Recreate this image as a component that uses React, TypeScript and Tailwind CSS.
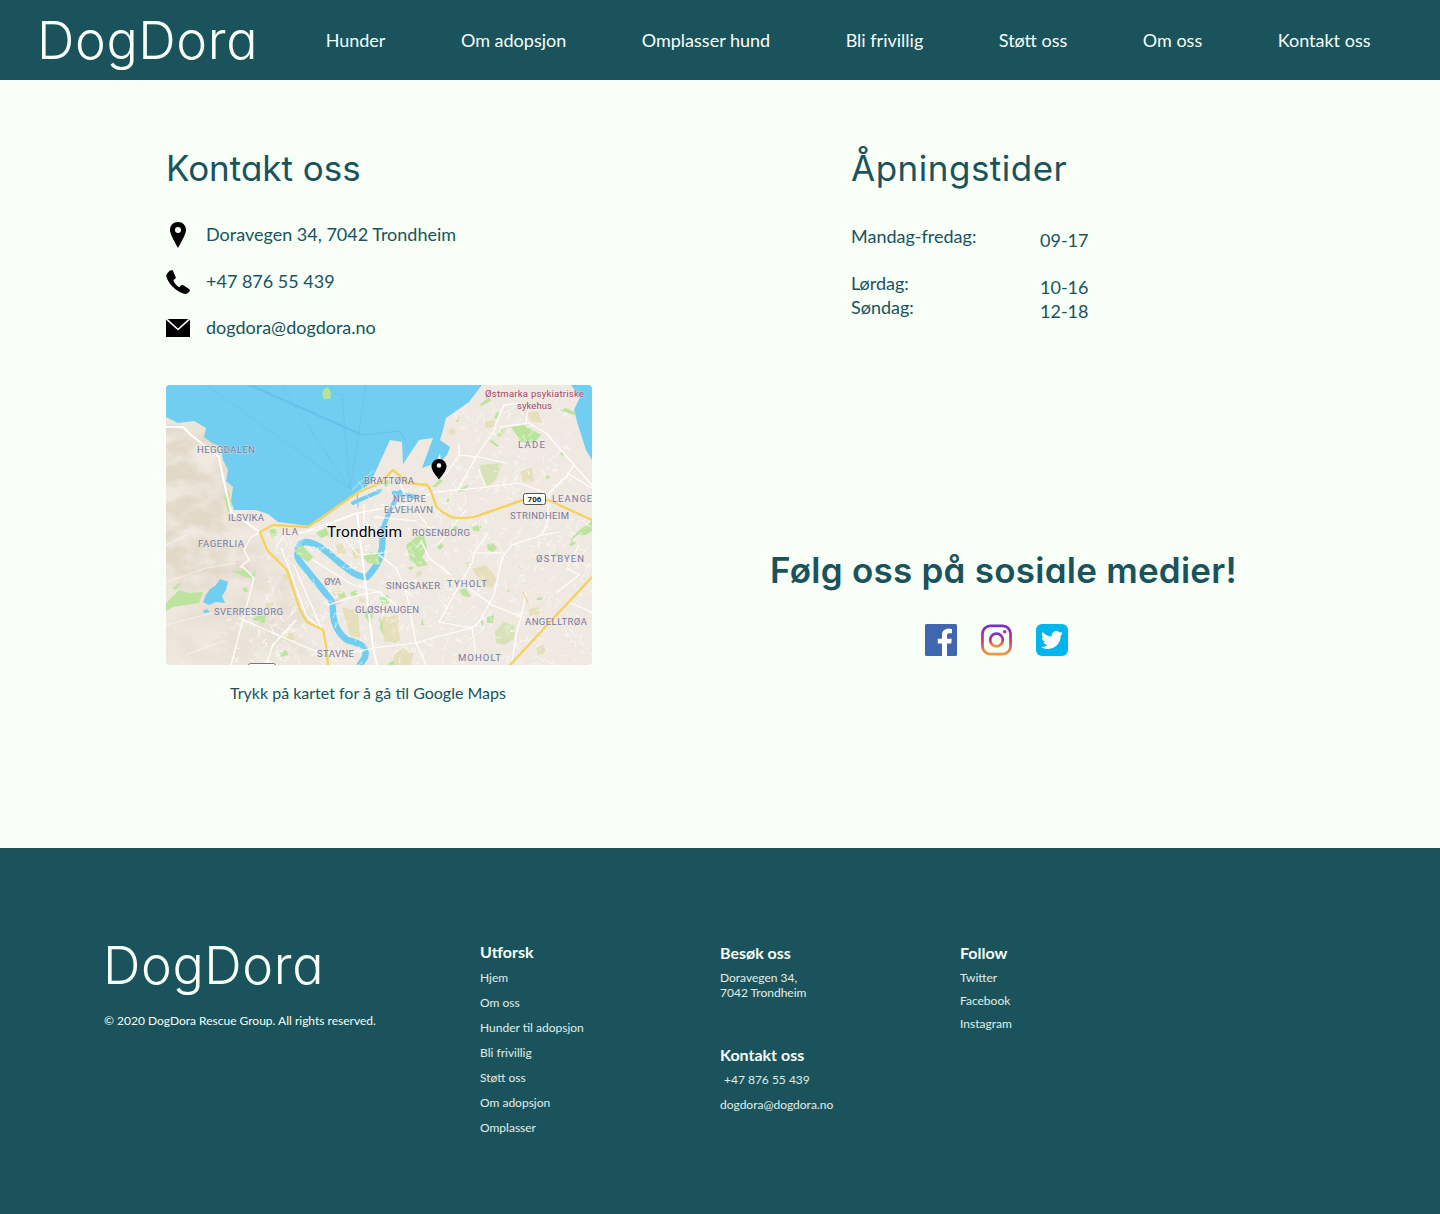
import React from 'react';
import { FaTwitter } from 'react-icons/fa';

const navLinks = ['Hunder', 'Om adopsjon', 'Omplasser hund', 'Bli frivillig', 'Støtt oss', 'Om oss', 'Kontakt oss'];
const exploreLinks = ['Hjem', 'Om oss', 'Hunder til adopsjon', 'Bli frivillig', 'Støtt oss', 'Om adopsjon', 'Omplasser'];
const followLinks = ['Twitter', 'Facebook', 'Instagram'];

const heading = "font-['Inter',sans-serif] [font-feature-settings:'cv11']";

// x, baseline, width, text
const mapLabels: [number, number, number, string][] = [
  [31, 68, 58, 'HEGGDALEN'],
  [198, 99, 50, 'BRATTØRA'],
  [227, 117, 33, 'NEDRE'],
  [218, 128, 49, 'ELVEHAVN'],
  [352, 63, 27, 'LADE'],
  [386, 117, 48, 'LEANGEN'],
  [344, 134, 59, 'STRINDHEIM'],
  [62, 136, 36, 'ILSVIKA'],
  [116, 150, 16, 'ILA'],
  [246, 151, 58, 'ROSENBORG'],
  [32, 162, 46, 'FAGERLIA'],
  [370, 177, 48, 'ØSTBYEN'],
  [158, 200, 17, 'ØYA'],
  [220, 204, 54, 'SINGSAKER'],
  [281, 202, 40, 'TYHOLT'],
  [48, 230, 69, 'SVERRESBORG'],
  [189, 228, 64, 'GLØSHAUGEN'],
  [359, 240, 62, 'ANGELLTRØA'],
  [151, 272, 37, 'STAVNE'],
  [292, 276, 43, 'MOHOLT'],
];

const greens = [
  'M345 42L358 40 375 50 368 58 355 57Z', 'M313 20L322 13 326 15 316 21Z', 'M328 33L331 27 333 28 331 34Z', 'M330 50L338 43 341 45 334 52Z',
  'M323 56L326 55 333 61 331 62Z', 'M290 36L292 32 294 33 292 37Z', 'M266 102L274 94 277 96 270 102Z', 'M291 107L300 100 303 101 295 107Z',
  'M278 117L282 113 284 116Z', 'M379 93L381 90 384 92 382 94Z', 'M394 68L397 66 399 69 396 71Z', 'M393 25L400 23 410 28 408 30Z',
  'M240 160L250 152 258 150 261 162 256 172 262 180 252 182 244 175Z', 'M270 162L275 158 278 161 274 165Z', 'M283 143L290 140 292 144 285 146Z', 'M305 142L316 140 313 146 308 146Z',
  'M321 160L326 157 331 163 327 167 322 165Z', 'M293 205L300 203 305 212 297 211Z', 'M321 232L328 230 327 238 321 238Z', 'M313 240L316 234 318 237 316 241Z',
  'M255 240L256 233 258 240Z', 'M213 212L222 210 224 218 216 220Z', 'M213 232L222 240 232 250 230 258 220 254 214 244Z', 'M403 160L406 156 410 158 406 161Z',
  'M371 213L376 212 376 215 371 215Z', 'M352 183L354 181 355 184Z', 'M341 206L342 204 344 207Z', 'M223 278L228 275 230 280 222 280Z', 'M242 183L245 181 248 183 244 185Z',
  'M0 218L13 205 23 208 37 207 33 218 20 220 7 222 0 226Z', 'M7 203L13 198 15 199 9 205Z', 'M65 186L78 185 85 190 90 184 88 193 80 192Z', 'M77 203L81 202 82 207 78 207Z',
  'M86 232L100 230 99 238 88 236Z', 'M113 268L121 265 122 270 115 272Z', 'M103 145L110 143 112 150 106 153Z', 'M128 165L136 160 147 172 142 177 134 172Z',
  'M197 172L205 167 213 170 213 180 202 178Z', 'M184 208L190 205 192 210 186 212Z', 'M172 210L178 207 180 212 174 214Z', 'M200 225L207 230 205 240 199 232Z',
  'M58 112L62 104 66 122 62 128Z', 'M388 170L391 166 393 170 390 172Z', 'M424 138L426 133V146L420 150 414 150Z', 'M216 100L220 95 224 96 220 102Z', 'M150 148L160 143 163 150 155 153Z',
];

const yellows = [
  'M360 28L372 26 376 38 365 36Z', 'M354 86L366 83 368 96 358 98Z', 'M306 184L320 180 331 194 326 203 316 200 310 190Z',
  'M363 224L373 222 374 229 364 231Z', 'M100 218L108 217 106 224 99 223Z', 'M117 249L127 248 129 255 118 255Z',
  'M216 232L232 230 234 256 218 257Z', 'M170 160L177 158 180 168 172 170Z', 'M186 165L193 163 195 172 188 174Z', 'M165 205L172 203 176 208 168 212Z', 'M176 222L192 226 194 254 184 250Z',
  'M282 45L288 43 290 49 284 50Z', 'M318 37L328 35 330 42 320 43Z', 'M258 142L263 138 266 144 260 146Z', 'M250 188L255 185 256 190 251 192Z', 'M194 212L200 214 198 218 193 216Z',
  'M116 190L122 188 124 194 118 196Z', 'M228 270L238 262 248 268 244 280H228Z', 'M370 262L378 260 380 268 372 270Z', 'M300 178L306 176 306 182 301 182Z',
];

const majorRoads = [
  'M94 147L85 152 78 165 83 175 74 182 77 182 88 193 65 280',
  'M140 146L191 128 237 120 262 110 270 107 313 103 353 98 380 108',
  'M278 92L293 70 293 58M293 70L313 72 341 78',
  'M328 43L338 20 353 18 362 24 360 38',
  'M333 42L363 38 380 48 408 80 426 100',
  'M330 43L313 67 296 97 290 107',
  'M408 80L400 92 383 108 381 140 376 150',
  'M401 88L426 103',
  'M313 85L320 102',
  'M376 150L346 160 336 173 328 210 313 237 306 243',
  'M376 150L393 147',
  'M308 168L338 168',
  'M322 148L308 168 306 178 273 237',
  'M303 203L326 220 355 232',
  'M360 208L355 232 350 250 346 277',
  'M273 237L306 243 310 270',
  'M250 258L266 253 306 243',
  'M213 262L250 258 260 280',
  'M413 190L401 183 413 160',
  'M391 207L413 190M405 218L426 227',
  'M213 170L230 183 240 205 250 258',
  'M255 155L263 173 285 190',
  'M73 233L123 255 147 265 173 270 213 262',
  'M115 163L123 183 140 230 157 247 162 280',
  'M128 180L157 247',
  'M162 220L193 210 213 207',
  'M130 235L107 260 100 280',
  'M147 175L187 200 213 207 232 222',
  'M191 128L150 145 118 150 110 162',
  'M233 96L240 112 238 125',
  'M215 120L235 122M210 132L250 136M198 120L198 155',
  'M216 168L192 170 175 148',
  'M265 145L252 128M300 125L280 150 272 160',
];

const faintRoads = ['M0 197L40 183 70 178', 'M0 240L47 228', 'M0 160L20 150', 'M100 150L150 148', 'M60 255L20 270'];

// thin street mesh, fixed seed so that every render gives the same map
function streetMesh() {
  let seed = 17;
  const next = () => {
    seed = (seed * 16807) % 2147483647;
    return seed / 2147483647;
  };
  const segs: string[] = [];
  const add = (x: number, y: number, s: number) => {
    segs.push(`M${x.toFixed(0)} ${y.toFixed(0)}l${((next() - 0.5) * s).toFixed(0)} ${((next() - 0.5) * s).toFixed(0)}l${((next() - 0.5) * s).toFixed(0)} ${((next() - 0.5) * s).toFixed(0)}`);
  };
  for (let i = 0; i < 620; i++) {
    const x = 100 + next() * 326;
    const y = 100 + next() * 180;
    if (x < 190 && y < 150) continue;
    add(x, y, 12);
  }
  for (let i = 0; i < 110; i++) {
    const x = 285 + next() * 120;
    const y = 20 + next() * 85;
    add(x, y, 10);
  }
  for (let i = 0; i < 50; i++) {
    add(60 + next() * 60, 220 + next() * 60, 10);
  }
  return segs.join('');
}

function TrondheimMap() {
  return (
    <svg viewBox="0 0 426 280" className="block w-[426px] h-[280px] rounded-[4px]" role="img" aria-label="Kart over Trondheim">
      <defs>
        <filter id="soft" x="0" y="0" width="100%" height="100%"><feGaussianBlur stdDeviation="0.3" /></filter>
        <filter id="fade" x="-20%" y="-20%" width="140%" height="140%"><feGaussianBlur stdDeviation="9" /></filter>
        <filter id="hill" x="0" y="0" width="100%" height="100%">
          <feTurbulence type="fractalNoise" baseFrequency="0.035 0.05" numOctaves="4" seed="8" />
          <feColorMatrix values="0 0 0 0 0.76  0 0 0 0 0.69  0 0 0 0 0.58  3 0 0 0 -0.850" />
        </filter>
        <mask id="hillMask">
          <g filter="url(#fade)" fill="#ffffff">
            <path d="M-20 30L60 50 70 130 95 160 80 200 40 200 -20 190Z" />
            <path d="M0 190L120 180 150 280H0Z" opacity="0.45" />
            <path d="M110 170L150 220 120 270 100 220Z" opacity="0.45" />
          </g>
        </mask>
      </defs>
      <rect width="426" height="280" fill="#efe9e1" />
      <rect width="426" height="280" fill="#000000" filter="url(#hill)" mask="url(#hillMask)" />
      <g filter="url(#soft)">
        {/* fjord */}
        <path
          fill="#72cef1"
          d="M0 0V32L12 38 28 36 40 43 38 52 46 58 55 62 57 75 62 85 60 96 67 102 65 116 68 125 90 125 102 129 112 137 143 141 152 137 175 120 194 106 205 98 207 92 224 55 236 57 237 79 253 55 267 53 256 83 270 78 274 68 275 76 281 70 284 62 274 55 277 45 280 33 303 17 316 0Z"
        />
        <path fill="#72cef1" d="M405 0H426V75L420 65 412 40 408 25 414 12Z" />
        <path fill="#b8e29a" d="M158 4l4-2 3 6-1 6-6 0-2-5z" />
        <g fill="none" stroke="#5db6e4" strokeWidth="0.6">
          <path d="M40 0L186 105M115 0L184 104M200 0L184 105M168 9L176 9 184 105" opacity="0.7" />
          <path d="M85 0L198 50 233 46 240 56M82 0L195 50" />
        </g>
        <path d="M186 105L208 85" stroke="#ffffff" strokeWidth="0.7" opacity="0.7" />
        {/* river and canals */}
        <g fill="none" stroke="#72cef1" strokeLinecap="round" strokeLinejoin="round">
          <path strokeWidth="6.500" d="M216 145C218 165 215 178 201 192 188 192 180 182 174 178 162 168 153 158 140 157 131 157 130 170 133 175 140 185 158 205 167 218 166 232 168 245 181 255 194 258 202 262 199 272L194 280" />
          <path strokeWidth="4.500" d="M216 145L224 125 234 107" />
          <path strokeWidth="4" d="M187 118L214 106" />
          <path strokeWidth="4.500" d="M228 108L250 112" />
          <path strokeWidth="1.200" d="M191 105L192 122" />
        </g>
        {/* lake */}
        <path fill="#72cef1" d="M54 194L62 197 60 205 56 211 59 218 50 217 43 220 37 217 40 210 44 204 50 200Z" />
        <path fill="#72cef1" d="M37 226L41 224 44 227 38 228Z" />
        <path d="M405 155C410 148 420 144 426 141M408 152C412 147 420 141 426 138" fill="none" stroke="#b8e29a" strokeWidth="1.500" />
        <g fill="#bce49f">{greens.map((d) => <path key={d} d={d} />)}</g>
        <g fill="#e5dfbc">{yellows.map((d) => <path key={d} d={d} />)}</g>
        <path fill="#d7e2b8" d="M314 80L336 78 330 95 320 102 316 94ZM329 246L338 237 350 241 348 254 338 260 330 258Z" />
        <path fill="#eccfd2" d="M168 215l5-2 2 5-5 2z" />
        <path d={streetMesh()} fill="none" stroke="#ffffff" strokeWidth="0.6" opacity="0.85" strokeLinejoin="round" />
        <g fill="none" stroke="#ffffff" strokeWidth="0.700" opacity="0.7">
          {faintRoads.map((d) => <path key={d} d={d} />)}
        </g>
        <g fill="none" stroke="#ffffff" strokeWidth="1.200" strokeLinejoin="round" strokeLinecap="round">
          {majorRoads.map((d) => <path key={d} d={d} />)}
        </g>
        <path d="M0 42L17 42 25 50 53 72 58 97 65 127 94 147M191 128L207 262 211 280" fill="none" stroke="#ffffff" strokeWidth="2" strokeLinejoin="round" />
        <g fill="none" stroke="#f5d261" strokeWidth="2.400" strokeLinejoin="round" strokeLinecap="round">
          <path d="M94 147L107 140 142 142 191 108 214 98 227 85 242 98 261 100C266 104 268 118 271 122 278 130 288 134 294 133 305 133 310 132 314 130L357 115 382 115 426 135" />
          <path d="M94 147L101 165 121 185 134 225 141 237 157 245 160 260 162 280" />
          <path d="M426 192L344 280" />
          <path d="M357 207L362 218" strokeWidth="1" />
        </g>
      </g>
      <g fontFamily="Roboto, sans-serif" fontSize="9.500" fill="#777aa0" stroke="#efe9e1" strokeWidth="0.900" paintOrder="stroke" strokeOpacity="0.65">
        {mapLabels.map(([x, y, w, t]) => (
          <text key={t} x={x} y={y} textLength={w} lengthAdjust="spacing">{t}</text>
        ))}
      </g>
      <g fontFamily="Roboto, sans-serif" fontSize="9.500" fill="#a8456f" stroke="#efe9e1" strokeWidth="0.800" paintOrder="stroke" strokeOpacity="0.65">
        <text x="319" y="12" textLength="99" lengthAdjust="spacing">Østmarka psykiatriske</text>
        <text x="351" y="24" textLength="35" lengthAdjust="spacing">sykehus</text>
      </g>
      <text x="161" y="152" textLength="75" lengthAdjust="spacing" fontFamily="Roboto, sans-serif" fontSize="15.500" fill="#000000" stroke="#ffffff" strokeWidth="1.500" paintOrder="stroke" strokeOpacity="0.7">Trondheim</text>
      <rect x="357.500" y="108.500" width="22" height="11" rx="2" fill="#ffffff" stroke="#555555" strokeWidth="1" />
      <text x="368.500" y="116.600" textAnchor="middle" fontFamily="Roboto, sans-serif" fontSize="8" fontWeight="700" fill="#222222">706</text>
      <rect x="82.500" y="278.500" width="27" height="10" rx="2" fill="#ffffff" stroke="#777777" strokeWidth="1" />
      {/* marker */}
      <path d="M273 74C268.800 74 265.500 77.300 265.500 81.400 265.500 85.500 270.800 91.500 273 94.500 275.200 91.500 280.500 85.500 280.500 81.400 280.500 77.300 277.200 74 273 74Z" fill="#000000" />
      <circle cx="273" cy="80.500" r="2.300" fill="#ffffff" />
    </svg>
  );
}

function PinIcon() {
  return (
    <svg viewBox="0 0 24 26" className="w-6 h-[26px] shrink-0" aria-hidden="true">
      <path fillRule="evenodd" d="M12 0C7.400 0 4 3.500 4 7.900 4 12.500 9.700 21.400 12 26 14.300 21.400 20 12.500 20 7.900 20 3.500 16.600 0 12 0ZM12 5A3 3 0 1 1 12 11 3 3 0 1 1 12 5Z" fill="#000000" />
    </svg>
  );
}

function PhoneIcon() {
  return (
    <svg viewBox="0 0 24 24" className="w-6 h-6 shrink-0" aria-hidden="true">
      <path d="M3 1.500C4 .5 6 0 6.800 .6L9.800 7.200C10 8 9.600 8.700 9 9L7.300 10C8.200 13 10.500 15.800 13.500 17.200L15 15.300C15.500 14.700 16.300 14.500 17 14.900L23.400 19.200C24 19.800 23.900 20.800 23.400 21.500 22 23.500 20 24.300 18 23.700 9 21 2 13 .3 6.500-.1 4.800 1.500 2.800 3 1.500Z" fill="#000000" />
    </svg>
  );
}

function MailIcon() {
  return (
    <svg viewBox="0 0 24 18" className="w-6 h-[18px] shrink-0" aria-hidden="true">
      <rect width="24" height="18" fill="#000000" />
      <path d="M.5 0L12 10.500 23.500 0" fill="none" stroke="#f7fff7" strokeWidth="1.600" />
    </svg>
  );
}

function FacebookIcon() {
  return (
    <svg viewBox="0 0 32 32" className="w-8 h-8" aria-hidden="true">
      <rect width="32" height="32" rx="1.500" fill="#4066b0" />
      <path d="M22 32V19.600H26.200L26.800 14.800H22V11.700C22 10.300 22.400 9.300 24.400 9.300H27V5C26.500 4.900 25 4.800 23.300 4.800 19.600 4.800 17 7 17 11.200V14.800H12.800V19.600H17V32Z" fill="#ffffff" />
    </svg>
  );
}

function InstagramIcon() {
  return (
    <svg viewBox="0 0 32 32" className="w-[31px] h-8" aria-hidden="true">
      <defs>
        <linearGradient id="ig" x1="0" y1="0" x2="0" y2="1">
          <stop offset="0" stopColor="#7b2fc4" />
          <stop offset="0.5" stopColor="#cb2f78" />
          <stop offset="1" stopColor="#ea9c43" />
        </linearGradient>
      </defs>
      <rect x="1.500" y="1.500" width="29" height="29" rx="8" fill="none" stroke="url(#ig)" strokeWidth="2.800" />
      <circle cx="16" cy="16" r="6.500" fill="none" stroke="url(#ig)" strokeWidth="2.800" />
      <circle cx="24.500" cy="7.500" r="1.800" fill="#a52fa0" />
    </svg>
  );
}

function TwitterIcon() {
  return (
    <div className="w-8 h-8 rounded-[6px] bg-[#00b4ec] flex items-center justify-center">
      <FaTwitter className="w-[22px] h-[22px] text-white" />
    </div>
  );
}

function Logo() {
  return <span className={`${heading} block -ml-[2px] pt-px text-[52px] leading-[64px] font-light tracking-[0.600px] text-[#f7fff7]`}>DogDora</span>;
}

export default function App() {
  return (
    <div className="w-[1440px] h-[1214px] bg-[#f7fff7] text-[#1a535c] font-['Lato',sans-serif]">
      <header className="h-20 bg-[#1a535c] flex items-center pl-[39px] text-[#f7fff7]">
        <Logo />
        <nav className="ml-[67.500px] flex gap-[75.500px] text-lg">
          {navLinks.map((link) => (
            <a key={link} href="#">{link}</a>
          ))}
        </nav>
      </header>

      <main className="h-[768px] pt-[66px] pl-[166px] flex">
        <section className="w-[426px]">
          <h1 className={`${heading} text-[35px] leading-[44px]`}>Kontakt oss</h1>
          <ul className="mt-[33px] flex flex-col gap-[22.500px] text-lg leading-6">
            <li className="flex items-center gap-4 h-6"><PinIcon /><span className="pb-[2px]">Doravegen 34, 7042 Trondheim</span></li>
            <li className="flex items-center gap-4 h-6"><PhoneIcon /><span className="pb-[2px]">+47 876 55 439</span></li>
            <li className="flex items-center gap-4 h-6"><MailIcon /><span className="pb-[2px]">dogdora@dogdora.no</span></li>
          </ul>
          <a href="#" className="block mt-[45px]"><TrondheimMap /></a>
          <p className="mt-4 pr-[22px] text-center text-base leading-6">Trykk på kartet for å gå til Google Maps</p>
        </section>

        <section className="ml-[178px] w-[466px]">
          <h1 className={`${heading} ml-[81px] text-[35px] leading-[44px] tracking-[0.500px]`}>Åpningstider</h1>
          <div className="ml-[81px] mt-[34px] flex text-lg leading-6">
            <div className="w-[189px]">
              <p className="mb-[23px]">Mandag-fredag:</p>
              <p>Lørdag:</p>
              <p>Søndag:</p>
            </div>
            <div className="pt-1">
              <p className="mb-[23px]">09-17</p>
              <p>10-16</p>
              <p>12-18</p>
            </div>
          </div>
          <h2 className={`${heading} mt-[225px] text-center text-[35px] leading-[44px] font-semibold tracking-[0.250px] whitespace-nowrap`}>Følg oss på sosiale medier!</h2>
          <div className="mt-[32px] ml-[155px] flex gap-6">
            <FacebookIcon />
            <InstagramIcon />
            <TwitterIcon />
          </div>
        </section>
      </main>

      <footer className="h-[366px] bg-[#1a535c] text-[#f7fff7] pt-[85px] pl-[104px] flex">
        <div className="w-[376px]">
          <div className="pl-px"><Logo /></div>
          <p className="mt-[15px] text-xs leading-[16px]">© 2020 DogDora Rescue Group. All rights reserved.</p>
        </div>
        <div className="w-60 pt-[7px]">
          <h3 className="text-base leading-6 font-bold">Utforsk</h3>
          <ul className="mt-[0.500px] text-xs leading-[25px] text-[#f7fff7]/90">
            {exploreLinks.map((link) => <li key={link}>{link}</li>)}
          </ul>
        </div>
        <div className="w-60 pt-2">
          <h3 className="text-base leading-6 font-bold">Besøk oss</h3>
          <p className="mt-[1px] text-xs leading-[15px] pt-[4px] text-[#f7fff7]/90">Doravegen 34,<br />7042 Trondheim</p>
          <h3 className="mt-[43px] text-base leading-6 font-bold">Kontakt oss</h3>
          <ul className="text-xs leading-[25px] text-[#f7fff7]/90">
            <li className="pl-1">+47 876 55 439</li>
            <li>dogdora@dogdora.no</li>
          </ul>
        </div>
        <div className="w-60 pt-2">
          <h3 className="text-base leading-6 font-bold">Follow</h3>
          <ul className="mt-[1px] text-xs leading-[23px] text-[#f7fff7]/90">
            {followLinks.map((link) => <li key={link}>{link}</li>)}
          </ul>
        </div>
      </footer>
    </div>
  );
}
